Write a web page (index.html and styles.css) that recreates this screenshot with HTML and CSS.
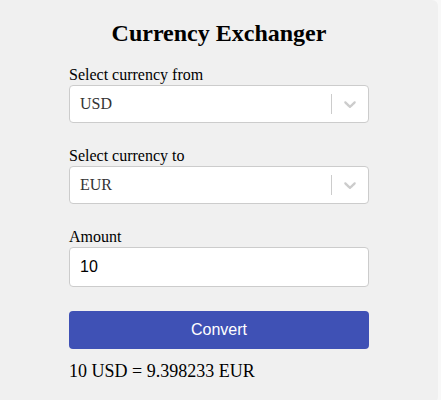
FILE: index.html
```html
<!DOCTYPE html>
<html>
<head>
<meta charset="utf-8">
<link rel="stylesheet" href="styles.css">
</head>
<body>
<div class="card">
  <h1 class="title">Currency Exchanger</h1>
  <div class="form">
    <div class="group">
      <label class="label">Select currency from</label>
      <div class="select">
        <div class="value">USD</div>
        <span class="sep"></span>
        <div class="indicator">
          <svg width="20" height="20" viewBox="0 0 20 20"><path fill="#cccccc" d="M4.516 7.548c0.436-0.446 1.043-0.481 1.576 0l3.908 3.747 3.908-3.747c0.533-0.481 1.141-0.446 1.574 0 0.436 0.445 0.408 1.197 0 1.615-0.406 0.418-4.695 4.502-4.695 4.502-0.217 0.223-0.502 0.335-0.787 0.335s-0.57-0.112-0.789-0.335c0 0-4.287-4.084-4.695-4.502s-0.436-1.17 0-1.615z"/></svg>
        </div>
      </div>
    </div>
    <div class="group">
      <label class="label">Select currency to</label>
      <div class="select">
        <div class="value">EUR</div>
        <span class="sep"></span>
        <div class="indicator">
          <svg width="20" height="20" viewBox="0 0 20 20"><path fill="#cccccc" d="M4.516 7.548c0.436-0.446 1.043-0.481 1.576 0l3.908 3.747 3.908-3.747c0.533-0.481 1.141-0.446 1.574 0 0.436 0.445 0.408 1.197 0 1.615-0.406 0.418-4.695 4.502-4.695 4.502-0.217 0.223-0.502 0.335-0.787 0.335s-0.57-0.112-0.789-0.335c0 0-4.287-4.084-4.695-4.502s-0.436-1.17 0-1.615z"/></svg>
        </div>
      </div>
    </div>
    <div class="group">
      <label class="label">Amount</label>
      <input class="input" type="text" value="10">
    </div>
    <button class="button">Convert</button>
    <p class="result">10 USD = 9.398233 EUR</p>
  </div>
</div>
</body>
</html>
```
FILE: styles.css
```css
html, body {
  margin: 0;
  padding: 0;
  background: #f8f8f8;
}
body {
  font-family: "Liberation Serif", "Times New Roman", serif;
  color: #000;
}
.card {
  width: 438px;
  box-sizing: border-box;
  background: #f0f0f0;
  border-radius: 0 6px 6px 0;
  padding: 19px 0 22px;
  min-height: 400px;
}
.title {
  margin: 0 0 19px;
  text-align: center;
  font-size: 24px;
  font-weight: bold;
  line-height: 28px;
}
.form {
  width: 300px;
  margin: 0 auto;
}
.group {
  margin-bottom: 24px;
}
.label {
  display: block;
  font-size: 16px;
  line-height: 18px;
  margin-bottom: 1px;
}
.select {
  display: flex;
  align-items: center;
  height: 38px;
  box-sizing: border-box;
  background: #fff;
  border: 1px solid #cccccc;
  border-radius: 4px;
}
.value {
  flex: 1;
  padding: 2px 10px;
  font-family: "Liberation Serif", "Times New Roman", serif;
  font-size: 16px;
  color: #333333;
}
.sep {
  align-self: stretch;
  width: 1px;
  margin: 8px 0;
  background: #cccccc;
}
.indicator {
  display: flex;
  padding: 8px;
}
.input {
  display: block;
  width: 100%;
  box-sizing: border-box;
  height: 40px;
  padding: 0 10px;
  border: 1px solid #cccccc;
  border-radius: 4px;
  background: #fff;
  font-family: "Liberation Sans", Arial, sans-serif;
  font-size: 16px;
  color: #000;
  outline: none;
}
.button {
  display: block;
  width: 100%;
  height: 38px;
  border: none;
  border-radius: 4px;
  background: #3f51b5;
  color: #fff;
  font-family: "Liberation Sans", Arial, sans-serif;
  font-size: 16px;
}
.result {
  margin: 12px 0 0;
  font-size: 18px;
  line-height: 20px;
}
```
